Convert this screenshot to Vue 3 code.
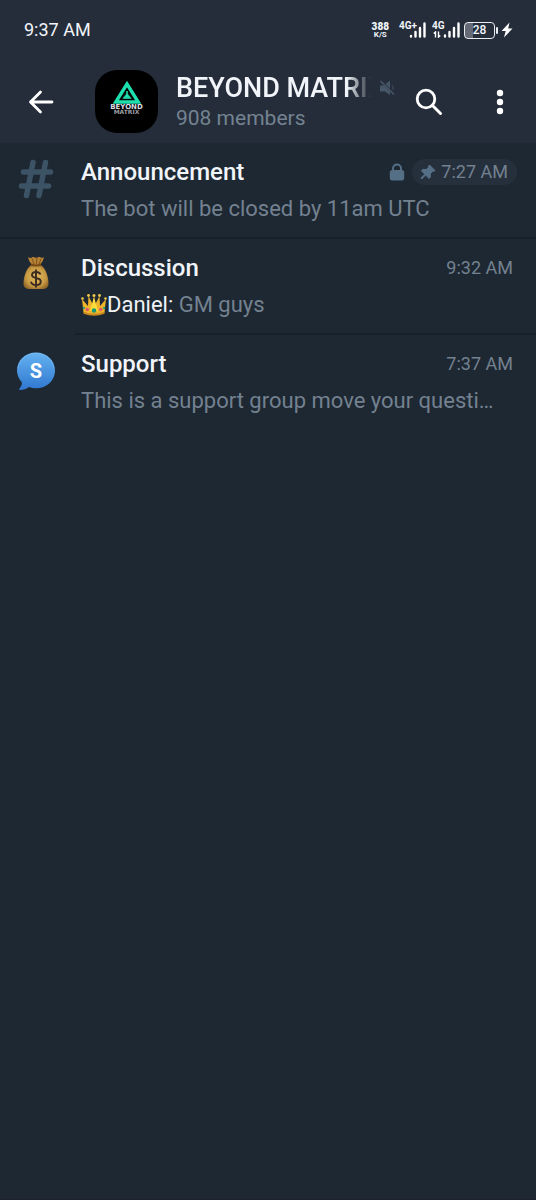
<script setup>
const topics = [
  { id: 'announcement', icon: 'hash', title: 'Announcement', text: 'The bot will be closed by 11am UTC', time: '7:27 AM', pinned: true },
  { id: 'discussion', icon: 'bag', title: 'Discussion', sender: 'Daniel:', text: 'GM guys', time: '9:32 AM' },
  { id: 'support', icon: 'bubble', title: 'Support', text: 'This is a support group move your questi…', time: '7:37 AM' }
]
</script>

<template>
  <div class="screen">
    <header class="top">
      <div class="status">
        <span class="clock">9:37 AM</span>
        <div class="indicators">
          <span class="speed"><b>388</b><small>K/S</small></span>
          <div class="signal">
            <span class="net">4G+</span>
            <svg class="bars" width="17" height="16" viewBox="0 0 17 16" aria-hidden="true">
              <path d="M2 14.5V14M6.5 14.5V10M11 14.5V6M15.5 14.5V1.5" />
            </svg>
          </div>
          <div class="signal second">
            <span class="net">4G</span>
            <svg class="arrows" width="8" height="7" viewBox="0 0 8 7" aria-hidden="true">
              <path d="M2.500 6.500V1L.7 2.500M5.500 .5V6L7.300 4.500" />
            </svg>
            <svg class="bars" width="17" height="16" viewBox="0 0 17 16" aria-hidden="true">
              <path d="M2 14.5V13.500M6.500 14.500V10M11 14.500V6M15.500 14.500V1.500" />
            </svg>
          </div>
          <div class="battery"><span>28</span></div>
          <svg class="bolt" width="12" height="16" viewBox="0 0 12 16" aria-hidden="true">
            <path d="M8.500 .5 .5 9h4.200L3 15.500 11.500 6.500H7.200z" fill="#fff" />
          </svg>
        </div>
      </div>

      <div class="toolbar">
        <button class="back" type="button" aria-label="Back">
          <svg width="26" height="24" viewBox="0 0 26 24" aria-hidden="true">
            <path d="M24 12H2.500M12.500 2 2.500 12l10 10" fill="none" stroke="#fff" stroke-width="2.800" stroke-linecap="round" stroke-linejoin="round" />
          </svg>
        </button>
        <div class="avatar">
          <svg width="28" height="23" viewBox="0 0 28 23" aria-hidden="true">
            <path d="M14 3 2.800 21h22.400z" fill="none" stroke="#1edfae" stroke-width="3.400" />
            <path d="M14 9.500 8.500 18h11z" fill="#04211b" />
            <path d="M14 10v4M14 13.500l-3 3.500h6z" fill="#1edfae" stroke="#1edfae" stroke-width="1.500" />
          </svg>
          <span class="brand">BEYOND</span>
          <span class="brand sub">MATRIX</span>
        </div>
        <div class="group">
          <div class="name-line">
            <h1>BEYOND MATRIX</h1>
            <svg class="muted" width="16" height="16" viewBox="0 0 16 16" aria-hidden="true">
              <path d="M1 5.500h4l6 6V15L6 11.500H1zM6.500 4 11 .8V8.500z" fill="#475767" />
              <path d="M1.500 1 15 14.500" stroke="#475767" stroke-width="1.600" />
              <path d="M13 5q1.800 2.500 .8 5" fill="none" stroke="#3a4959" stroke-width="1.200" />
            </svg>
          </div>
          <p>908 members</p>
        </div>
        <button class="search" type="button" aria-label="Search">
          <svg width="28" height="28" viewBox="0 0 28 28" aria-hidden="true">
            <circle cx="11" cy="11" r="8.800" fill="none" stroke="#fff" stroke-width="2.800" />
            <path d="M17.500 17.500 25.500 25.500" stroke="#fff" stroke-width="3" stroke-linecap="round" />
          </svg>
        </button>
        <button class="more" type="button" aria-label="More options">
          <svg width="8" height="26" viewBox="0 0 8 26" aria-hidden="true">
            <g fill="#fff"><circle cx="4" cy="4" r="3.200" /><circle cx="4" cy="13" r="3.200" /><circle cx="4" cy="22" r="3.200" /></g>
          </svg>
        </button>
      </div>
    </header>

    <main>
      <ul class="topics">
        <li v-for="topic in topics" :key="topic.id" :class="['topic', topic.id]">
          <div class="icon">
            <svg v-if="topic.icon === 'hash'" width="36" height="40" viewBox="0 0 36 40" aria-hidden="true">
              <path d="M15 3.500 8.500 36.500M27.500 3.500 21 36.500M5.500 13h27M3.500 27h27" fill="none" stroke="#3c5265" stroke-width="5.500" stroke-linecap="round" />
            </svg>
            <svg v-else-if="topic.icon === 'bag'" width="28" height="36" viewBox="0 0 28 36" aria-hidden="true">
              <defs>
                <radialGradient id="bag-fill" cx=".5" cy=".5" r=".6">
                  <stop offset="0" stop-color="#e0bb60" />
                  <stop offset=".65" stop-color="#c69a43" />
                  <stop offset="1" stop-color="#8c6126" />
                </radialGradient>
              </defs>
              <path d="M6 2q3 2 5-.2 3 2 6 0 3 2 5 .2-.5 4-4 8h-8Q6.500 6 6 2z" fill="#b98334" />
              <path d="M10 3.500 12 9M15 3l-.5 6M19 4l-2 5" stroke="#7b5020" />
              <path d="M9.500 10h9C23 12 26.500 21 26.500 28.500c0 4-2.500 5.500-6 5.500h-13c-3.500 0-6-1.500-6-5.500C1.500 21 5 12 9.500 10z" fill="url(#bag-fill)" />
              <path d="M9 9.500q5 2 10 0" fill="none" stroke="#774716" stroke-width="2.200" />
              <path d="M18.500 19.500q-1-2.500-4.500-2.500-4 0-4 3 0 2.300 4 3 4.800.8 4.800 3.700 0 3.300-4.800 3.300-4.200 0-5-3.300M14 14.500v18" fill="none" stroke="#3c2b21" stroke-width="1.900" />
            </svg>
            <svg v-else width="40" height="40" viewBox="0 0 40 40" aria-hidden="true">
              <defs>
                <linearGradient id="bubble-fill" x1="0" y1="0" x2="0" y2="1">
                  <stop offset="0" stop-color="#65b2f0" />
                  <stop offset="1" stop-color="#2f77d0" />
                </linearGradient>
              </defs>
              <path d="M20 1.500c10.800 0 19 7.800 19 18s-8.200 17.800-19 17.800c-2.500 0-4.800-.4-7-1.200-2.500 1.800-5.500 2.900-9 2.900-1 0-1.200-.8-.5-1.500 1.500-1.500 2.400-3.500 2.400-6.200C2.800 28 1 24 1 19.500c0-10.200 8.200-18 19-18z" fill="url(#bubble-fill)" />
              <path d="M2 17.500C3 8.500 10.500 2.300 20 2.300S37 8.500 38 17.500" fill="none" stroke="#83c3f5" stroke-opacity=".5" />
              <text x="20" y="27" text-anchor="middle">S</text>
            </svg>
          </div>
          <div class="body">
            <div class="line">
              <h2>{{ topic.title }}</h2>
              <svg v-if="topic.pinned" class="lock" width="16" height="18" viewBox="0 0 16 18" aria-label="Closed topic">
                <rect x=".8" y="7" width="14.400" height="10.500" rx="2.500" fill="#556f86" />
                <path d="M4 8V5.500a4 4 0 0 1 8 0V8" fill="none" stroke="#556f86" stroke-width="1.900" />
              </svg>
              <span :class="['time', { pill: topic.pinned }]">
                <svg v-if="topic.pinned" width="16" height="16" viewBox="0 0 16 16" aria-hidden="true">
                  <path d="M9.500 1 15 6.500l-1.500 1-.8-.2-2.500 2.500.3 3-1.500 1.700L5.600 11 1.800 15 .8 14 4.800 10.200 1.300 6.700l1.800-1.400 3 .3L8.800 3 8.500 2z" fill="#556f86" stroke="#556f86" stroke-width="1" stroke-linejoin="round" />
                </svg>
                {{ topic.time }}
              </span>
            </div>
            <p class="message">
              <template v-if="topic.sender">
                <svg class="crown" width="26" height="24" viewBox="0 0 26 24" aria-label="Crown">
                  <path d="M2.500 19.500 1 6l6 7L7.500 3l4.300 8.500L13 3l1.200 8.500L18.500 3l.5 10 6-7-1.500 13.500Q13 24 2.500 19.500z" fill="#eeb52c" />
                  <path d="M9 18 13 4l4 14z" fill="#ffdc3c" />
                  <path d="M2.500 18.500q10.500 4.500 21 0v2.200q-10.500 4-21 0z" fill="#c98a1e" />
                  <g fill="#f4c84a"><circle cx="1.500" cy="5.500" r="1.300" /><circle cx="7.500" cy="2.500" r="1.400" /><circle cx="13" cy="2.500" r="1.500" /><circle cx="18.500" cy="2.500" r="1.400" /><circle cx="24.500" cy="5.500" r="1.300" /></g>
                  <g fill="#e0586a"><circle cx="6.300" cy="16.500" r="1.700" /><circle cx="19.700" cy="16.500" r="1.700" /></g>
                  <circle cx="13" cy="17.500" r="2.200" fill="#159a72" />
                  <circle cx="2.800" cy="15" r="1.200" fill="#2c9b79" /><circle cx="23.200" cy="15" r="1.200" fill="#2c9b79" />
                </svg><span class="sender">{{ topic.sender }}</span>{{ ' ' }}
              </template>{{ topic.text }}
            </p>
          </div>
        </li>
      </ul>
    </main>
  </div>
</template>

<style>
body {
  margin: 0;
  background: #1e2832;
}
</style>

<style scoped>
.screen {
  min-height: 100vh;
  box-sizing: border-box;
  border-bottom: 1px solid #1d202d;
  background: #1e2832;
  color: #f1f5fa;
  font-family: Roboto, "Liberation Sans", sans-serif;
}
h1, h2, p, ul {
  margin: 0;
  padding: 0;
}
svg {
  display: block;
  flex: none;
}
.top {
  background: #252d3a;
}
.status {
  display: flex;
  align-items: center;
  justify-content: space-between;
  height: 60px;
  padding: 0 23px 0 24px;
}
.clock {
  font-size: 18px;
  line-height: 24px;
}
.indicators {
  display: flex;
  align-items: center;
}
.speed {
  display: flex;
  flex-direction: column;
  align-items: center;
  margin-right: 10px;
  font-weight: 700;
}
.speed b {
  font-size: 10px;
  line-height: 9px;
}
.speed small {
  font-size: 8px;
  line-height: 8px;
}
.signal {
  position: relative;
  display: flex;
  justify-content: flex-end;
  width: 27px;
  height: 16px;
  margin-right: 6px;
}
.net {
  position: absolute;
  top: -1px;
  left: 0;
  font-size: 10px;
  font-weight: 700;
  line-height: 10px;
}
.arrows {
  position: absolute;
  bottom: 0;
  left: 1px;
}
.signal.second {
  width: 28px;
  margin-right: 4px;
}
.bars path {
  fill: none;
  stroke: #fff;
  stroke-width: 2.4;
  stroke-linecap: round;
}
.arrows path {
  fill: none;
  stroke: #fff;
  stroke-width: 1.4;
}
.battery {
  position: relative;
  box-sizing: border-box;
  width: 31px;
  height: 17px;
  margin-right: 6px;
  border: 1px solid #e8ebef;
  border-radius: 4px;
  background: linear-gradient(90deg, #656b76 28%, transparent 28%);
  font-size: 12px;
  font-weight: 500;
  line-height: 15px;
  text-align: center;
}
.battery::after {
  content: "";
  position: absolute;
  top: 4px;
  right: -4px;
  width: 2px;
  height: 7px;
  border-radius: 1px;
  background: #e8ebef;
}
.toolbar {
  display: flex;
  align-items: center;
  height: 83px;
  padding: 0 20px;
}
button {
  display: flex;
  align-items: center;
  justify-content: center;
  flex: none;
  height: 48px;
  padding: 0;
  border: 0;
  background: none;
}
.back {
  width: 42px;
  margin-right: 33px;
}
.avatar {
  display: flex;
  flex-direction: column;
  align-items: center;
  flex: none;
  box-sizing: border-box;
  width: 63px;
  height: 63px;
  padding-top: 11px;
  border-radius: 22px;
  background: #000;
}
.brand {
  color: #dcdde1;
  font-family: "DejaVu Sans", sans-serif;
  font-size: 7px;
  font-weight: 700;
  line-height: 6px;
}
.brand.sub {
  color: #9c9da3;
  font-size: 6px;
  line-height: 4px;
}
.group {
  flex: 1;
  min-width: 0;
  margin-left: 18px;
}
.name-line {
  display: flex;
  align-items: center;
}
h1 {
  flex: 1;
  min-width: 0;
  overflow: hidden;
  font-size: 27px;
  font-weight: 500;
  line-height: 32px;
  white-space: nowrap;
  mask-image: linear-gradient(90deg, #000 calc(100% - 24px), transparent);
}
.muted {
  margin-left: 8px;
}
.group p {
  color: #748391;
  font-size: 21px;
  line-height: 28px;
}
.search {
  width: 48px;
  margin-left: 10px;
}
.more {
  width: 32px;
  margin-left: 31px;
}
.topics {
  list-style: none;
}
.topic {
  display: flex;
  position: relative;
  height: 96px;
}
.topic:not(:last-child)::after {
  content: "";
  position: absolute;
  right: 0;
  bottom: 0;
  left: 75px;
  height: 2px;
  background: #17202a;
}
.topic.announcement::after {
  left: 0;
}
.icon {
  display: flex;
  justify-content: center;
  flex: none;
  width: 71px;
  padding-top: 16px;
}
.icon text {
  fill: #fff;
  font-size: 20px;
  font-weight: 700;
}
.body {
  flex: 1;
  min-width: 0;
  padding: 13px 23px 0 10px;
}
.line {
  display: flex;
  align-items: center;
  height: 32px;
}
h2 {
  flex: 1;
  font-size: 24px;
  font-weight: 500;
  line-height: 32px;
}
.lock {
  margin-right: 7px;
}
.time {
  color: #738190;
  font-size: 18px;
  line-height: 26px;
}
.pill {
  display: flex;
  align-items: center;
  gap: 5px;
  margin-right: -4px;
  padding: 0 9px 0 8px;
  border-radius: 13px;
  background: #25303c;
}
.message {
  overflow: hidden;
  margin-top: 5px;
  color: #738190;
  font-size: 22px;
  line-height: 32px;
  text-overflow: ellipsis;
  white-space: nowrap;
}
.crown {
  display: inline-block;
  vertical-align: -5px;
}
.sender {
  color: #eef2f7;
}
</style>
